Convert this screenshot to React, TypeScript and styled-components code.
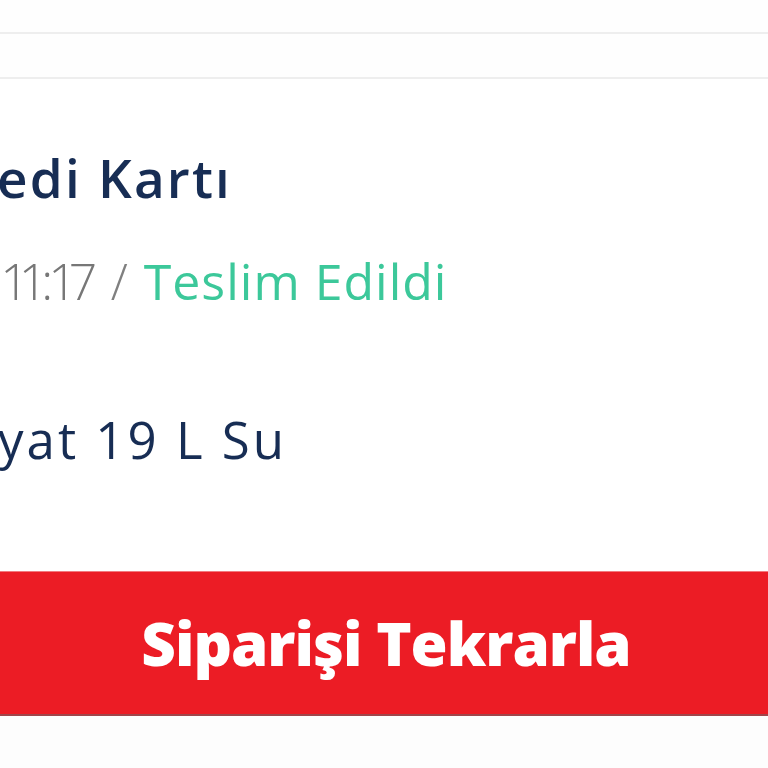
import styled, { createGlobalStyle } from "styled-components";

const GlobalStyle = createGlobalStyle`
  html, body {
    margin: 0;
    padding: 0;
    background: #fdfdfd;
  }
  #root {
    min-height: 768px;
    overflow: hidden;
  }
`;

const Page = styled.div`
  width: 768px;
  height: 768px;
  overflow: hidden;
  display: flex;
  flex-direction: column;
  background: #fdfdfd;
  font-family: "Open Sans", "Noto Sans", sans-serif;
`;

const Band = styled.div<{ $height: number }>`
  height: ${(p) => p.$height}px;
  flex-shrink: 0;
  background: #fefefe;
  border-bottom: 2px solid #eeeeee;
`;

const Card = styled.section`
  display: flex;
  flex-direction: column;
  background: #ffffff;
  padding-top: 69px;
`;

const Title = styled.h2`
  margin: 0 0 0 -3px;
  color: #172d54;
  font-size: 53px;
  font-weight: 600;
  line-height: 60px;
  letter-spacing: 2.2px;
  white-space: nowrap;
`;

const MetaLine = styled.div`
  margin: 43px 0 0 4px;
  font-size: 50px;
  font-weight: 300;
  line-height: 60px;
  white-space: nowrap;
  display: flex;
  gap: 16px;
`;

const Time = styled.span`
  color: #777777;
  font-variant-numeric: proportional-nums;
  letter-spacing: -1px;
`;

const Slash = styled.span`
  color: #808080;
`;

const Status = styled.span<{ $tone: "done" | "pending" }>`
  color: ${(p) => (p.$tone === "done" ? "#3cc89a" : "#f0a020")};
  letter-spacing: 1px;
  font-weight: 400;
`;

const ItemLine = styled.div`
  margin: 98px 0 0 -2px;
  color: #172d54;
  font-size: 51px;
  font-weight: 400;
  line-height: 60px;
  letter-spacing: 3px;
  white-space: nowrap;
`;

const RepeatButton = styled.button`
  margin-top: 102px;
  height: 145px;
  width: 100%;
  border: 0;
  border-top: 1px solid #f27a7e;
  border-bottom: 2px solid #a0454a;
  background: #ec1c25;
  color: #ffffff;
  font-family: "Open Sans", "Noto Sans", sans-serif;
  font-size: 60px;
  font-weight: 800;
  letter-spacing: -1px;
  display: flex;
  align-items: center;
  justify-content: center;
  padding: 0 0 0 4px;
  cursor: pointer;
`;

export default function App() {
  return (
    <Page>
      <GlobalStyle />
      <Band $height={32} />
      <Band $height={43} />
      <Card>
        <Title>edi Kartı</Title>
        <MetaLine>
          <Time>11:17</Time>
          <Slash>/</Slash>
          <Status $tone="done">Teslim Edildi</Status>
        </MetaLine>
        <ItemLine>yat 19 L Su</ItemLine>
        <RepeatButton type="button">Siparişi Tekrarla</RepeatButton>
      </Card>
    </Page>
  );
}
